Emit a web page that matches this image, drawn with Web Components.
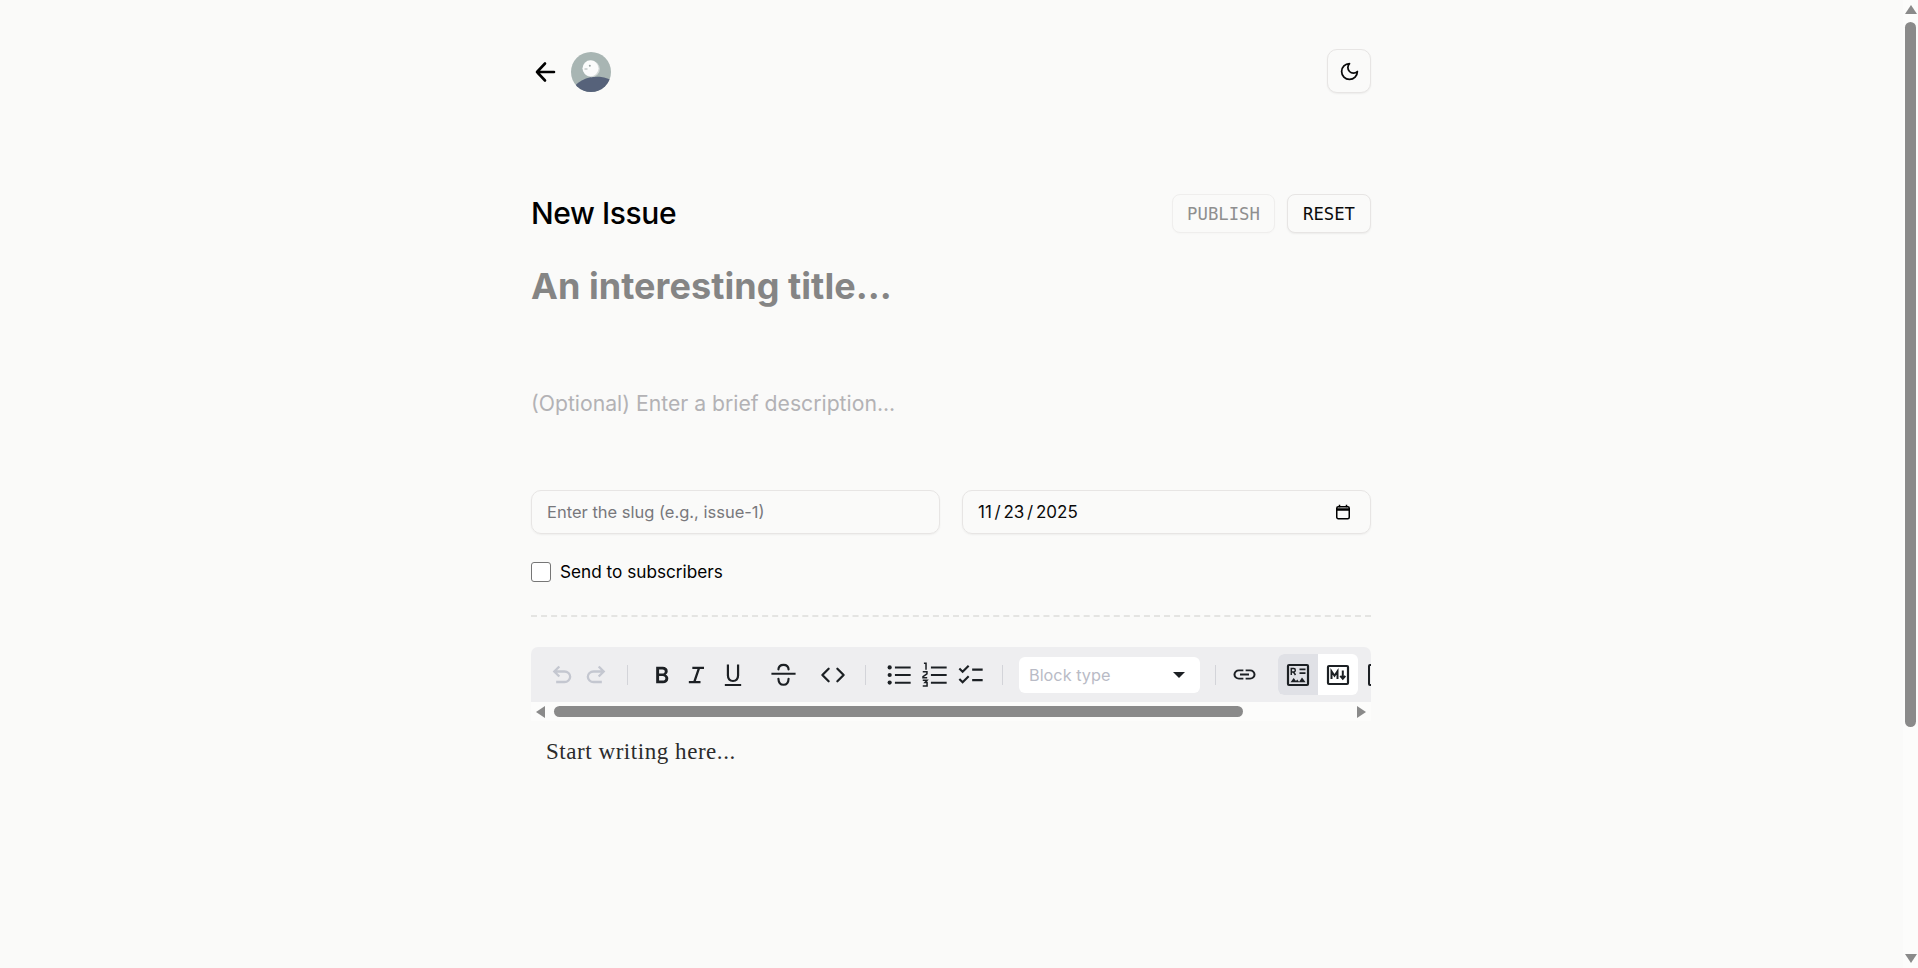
<!doctype html>
<html lang="en">
<head>
<meta charset="utf-8">
<title>New Issue</title>
<style>
  html, body { margin: 0; height: 100%; overflow: hidden; background: #fafaf9; }
  body { display: flex; font-family: Inter, "Liberation Sans", sans-serif; color: #0a0a0a; }
  issue-page { flex: 1; min-width: 0; }
</style>
</head>
<body>
<issue-page>
  <top-nav></top-nav>
  <page-heading></page-heading>
  <issue-meta></issue-meta>
  <md-editor></md-editor>
</issue-page>
<page-scrollbar></page-scrollbar>

<script>
const SERIF = '"Liberation Serif", serif';

const ICONS = {
  undo: '<path d="M7 19v-2h7.1q1.575 0 2.738-1T18 13.5q0-1.5-1.162-2.5T14.1 10H7.8l2.6 2.6L9 14 4 9l5-5 1.4 1.4L7.8 8h6.3q2.425 0 4.163 1.575T20 13.5q0 2.35-1.738 3.925T14.1 19H7z"/>',
  redo: '<path d="M17 19v-2H9.9q-1.575 0-2.738-1T6 13.5q0-1.5 1.162-2.5T9.9 10h6.3l-2.6 2.6L15 14l5-5-5-5-1.4 1.4L16.2 8H9.9q-2.425 0-4.163 1.575T4 13.5q0 2.35 1.738 3.925T9.9 19H17z"/>',
  bold: '<path fill-rule="evenodd" d="M7 19V5h5.6q1.9 0 3.1 1t1.2 2.7q0 1-.5 1.8t-1.3 1.2q1.1.4 1.7 1.3t.6 2q0 1.9-1.300 2.950T12.800 19H7zm2.500-8.200h2.900q.9 0 1.450-.5T14.400 9q0-.8-.55-1.300T12.400 7.200H9.500v3.600zm0 6h3.200q1 0 1.600-.550T14.900 14.900q0-.9-.6-1.450T12.700 12.900H9.500v3.900z"/>',
  italic: '<path d="M5 19v-1.800h3.900l3.500-10.400H8V5h10v1.800h-3.500l-3.500 10.400H15V19H5z"/>',
  underline: '<path d="M5 21.500v-1.800h14v1.800H5zm7-3.500q-2.500 0-3.900-1.500T6.700 12.400V3h1.900v9.400q0 1.800.9 2.800t2.500 1q1.600 0 2.500-1t.9-2.800V3h1.900v9.400q0 2.600-1.400 4.100T12 18z"/>',
  strike: '<path d="M2 10.500h20v1.800H2z"/><path fill="none" stroke="currentColor" stroke-width="1.800" stroke-linecap="round" d="M7.800 7.800Q8 4 12 4t4.200 3.800M7.800 15.500Q8 20.500 12 20.500t4.200-5"/>',
  code: '<path fill="none" stroke="currentColor" stroke-width="1.800" stroke-linecap="round" stroke-linejoin="round" d="M8.500 7 3.500 12l5 5M15.500 7l5 5-5 5"/>',
  bullets: '<circle cx="4" cy="5.500" r="1.800"/><circle cx="4" cy="12" r="1.800"/><circle cx="4" cy="18.500" r="1.800"/><path d="M8.500 4.700H22v1.700H8.500zM8.500 11.200H22v1.700H8.500zM8.500 17.700H22v1.700H8.500z"/>',
  numbered: '<path d="M8.500 4.700H22v1.700H8.500zM8.500 11.200H22v1.700H8.500zM8.500 17.700H22v1.700H8.500z"/><path fill="none" stroke="currentColor" stroke-width="1.300" d="M2.500 2h1.800v5.500M1.500 9.300h3.600v1.700l-3.400 2.400v1h3.600M1.500 16.500h3.700l-1.800 1.900h1.800v3H1.500"/>',
  checks: '<path fill="none" stroke="currentColor" stroke-width="1.800" d="M2 6.500l2.800 2.800L10 4M2 15.500l2.800 2.800L10 13"/><path d="M13 6.500h9v1.800h-9zM13 15.500h9v1.800h-9z"/>',
  link: '<path d="M7 16.500q-2 0-3.400-1.300T2.200 12t1.400-3.200T7 7.500h4v1.700H7q-1.300 0-2.150.8T4 12t.85 2 2.150.8h4v1.700H7zm1-3.600v-1.800h8v1.800H8zm5 3.600v-1.700h4q1.300 0 2.150-.8T20 12t-.85-2T17 9.200h-4V7.500h4q2 0 3.400 1.300T21.800 12t-1.400 3.200T17 16.500h-4z"/>',
  rich: '<rect x="2" y="2" width="20" height="20" rx="1" fill="none" stroke="currentColor" stroke-width="2.200"/><path d="M13.500 5.500h6v1.800h-6zM13.500 9.300h6v1.800h-6zM4.500 19.300l3.200-4.300 2.300 3 1.200-1.500 2.200 2.800zM12.800 19.300l3.200-4.800 3.600 4.800z"/><path fill="none" stroke="currentColor" stroke-width="1.500" d="M5.300 12V5.600h2.400q1.600 0 1.600 1.700T7.700 9H5.300M7.500 9l2 3"/>',
  markdown: '<rect x="2" y="3" width="20" height="18" rx="1" fill="none" stroke="currentColor" stroke-width="2.200"/><path fill="none" stroke="currentColor" stroke-width="2" d="M5.500 16V8.300l3 4.400 3-4.400V16M16.800 7.500V15M14.300 12.800l2.500 3 2.500-3"/>'
};

function icon(name, size) {
  return `<svg viewBox="0 0 24 24" width="${size}" height="${size}" fill="currentColor" aria-hidden="true">${ICONS[name]}</svg>`;
}

class IssuePage extends HTMLElement {
  constructor() {
    super();
    this.attachShadow({ mode: 'open' });
    this.shadowRoot.innerHTML = `
      <style>
        :host { display: block; padding-right: 1px; }
        .wrap {
          width: 840px;
          margin: 0 auto;
          padding-top: 49px;
          display: flex;
          flex-direction: column;
        }
      </style>
      <div class="wrap"><slot></slot></div>
    `;
  }
}

class TopNav extends HTMLElement {
  constructor() {
    super();
    this.attachShadow({ mode: 'open' });
    this.shadowRoot.innerHTML = `
      <style>
        :host { display: flex; align-items: center; justify-content: space-between; height: 44px; }
        .left { display: flex; align-items: center; gap: 14px; padding-top: 1px; }
        svg { display: block; }
        .back { color: #000; }
        button {
          width: 44px; height: 44px; padding: 0; box-sizing: border-box;
          display: flex; align-items: center; justify-content: center;
          background: #fafaf9; color: #0a0a0a;
          border: 1px solid #e7e5e4; border-radius: 10px;
          box-shadow: 0 1px 2px rgba(0,0,0,.06);
        }
      </style>
      <div class="left">
        <svg class="back" width="26" height="24" viewBox="0 0 26 24" fill="none" stroke="currentColor" stroke-width="2.600" stroke-linecap="round" stroke-linejoin="round">
          <path d="M6 12h17M14 3.500 6 12l8 8.500"/>
        </svg>
        <svg width="40" height="40" viewBox="0 0 40 40">
          <defs><clipPath id="c"><circle cx="20" cy="20" r="20"/></clipPath></defs>
          <g clip-path="url(#c)">
            <rect width="40" height="40" fill="#a8b5b3"/>
            <ellipse cx="23" cy="42" rx="24" ry="17" fill="#56627a" transform="rotate(-12 23 42)"/>
            <circle cx="20.500" cy="17" r="8.300" fill="#d4d9d8"/>
            <circle cx="19.500" cy="16.300" r="8" fill="#fbfbfb"/>
            <circle cx="18.800" cy="13.700" r="1" fill="#9aa3a3"/>
            <path d="M13.500 17h3" stroke="#a9b0b0" stroke-width="1"/>
          </g>
        </svg>
      </div>
      <button aria-label="Toggle theme">
        <svg width="21" height="21" viewBox="0 0 24 24" fill="none" stroke="currentColor" stroke-width="2" stroke-linecap="round" stroke-linejoin="round">
          <path d="M12 3a6 6 0 0 0 9 9 9 9 0 1 1-9-9Z"/>
        </svg>
      </button>
    `;
  }
}

class PageHeading extends HTMLElement {
  constructor() {
    super();
    this.attachShadow({ mode: 'open' });
    this.shadowRoot.innerHTML = `
      <style>
        :host { display: block; margin-top: 101px; }
        .row { display: flex; align-items: center; justify-content: space-between; height: 39px; }
        h1 { margin: 0; font: 500 30px/39px Inter, "Liberation Sans", sans-serif; letter-spacing: -.4px; color: #000; }
        .actions { display: flex; gap: 12px; }
        button {
          height: 39px; box-sizing: border-box; padding: 2px 0 0;
          font: 400 17.300px/1 "DejaVu Sans Mono", "Liberation Mono", monospace;
          background: #fafaf9; color: #0a0a0a;
          border: 1px solid #e7e5e4; border-radius: 8px;
          box-shadow: 0 1px 2px rgba(0,0,0,.06);
        }
        .pub { width: 103px; }
        .res { width: 84px; }
        button[disabled] { color: #8f8f8f; border-color: #efeeed; box-shadow: 0 1px 2px rgba(0,0,0,.02); }
        .title {
          margin-top: 29px; font: 700 36px/48px Inter, "Liberation Sans", sans-serif;
          letter-spacing: .05px; color: #858585; height: 72px;
        }
        .desc { margin-top: 55px; font: 400 21.200px/28px Inter, "Liberation Sans", sans-serif; color: #b3b2b5; height: 101px; }
      </style>
      <div class="row">
        <h1>New Issue</h1>
        <div class="actions">
          <button class="pub" disabled>PUBLISH</button>
          <button class="res">RESET</button>
        </div>
      </div>
      <div class="title">An interesting title...</div>
      <div class="desc">(Optional) Enter a brief description...</div>
    `;
  }
}

class IssueMeta extends HTMLElement {
  constructor() {
    super();
    this.attachShadow({ mode: 'open' });
    this.shadowRoot.innerHTML = `
      <style>
        :host { display: block; }
        .fields { display: grid; grid-template-columns: 1fr 1fr; gap: 22px; }
        .field {
          height: 44px; box-sizing: border-box; padding: 0 19px 0 15px;
          display: flex; align-items: center; justify-content: space-between;
          border: 1px solid #e7e5e4; border-radius: 10px;
          box-shadow: 0 1px 2px rgba(0,0,0,.05);
          font-size: 16.500px;
        }
        .hint { color: #78787c; }
        .date { color: #0a0a0a; font-size: 17px; }
        .date b { font-weight: 400; margin: 0 2.750px; }
        .check { display: flex; align-items: center; gap: 9px; margin-top: 28px; font-size: 17.200px; color: #000; line-height: 20px; }
        .box { width: 20px; height: 20px; box-sizing: border-box; background: #fff; border: 1.500px solid #767676; border-radius: 3px; }
        hr { margin: 33px 0 0; border: 0; border-top: 2px dashed #e4e4e2; }
        svg { display: block; }
      </style>
      <div class="fields">
        <div class="field"><span class="hint">Enter the slug (e.g., issue-1)</span></div>
        <div class="field">
          <span class="date">11<b>/</b>23<b>/</b>2025</span>
          <svg width="16" height="16" viewBox="0 0 16 16" fill="none" stroke="#000" stroke-width="1.500">
            <rect x="1.750" y="2.750" width="12.500" height="12" rx="1.500"/>
            <path d="M1 5.500h14" stroke-width="2.500"/><path d="M4.500 .8v2.500M11.500 .8v2.500"/>
          </svg>
        </div>
      </div>
      <label class="check"><span class="box"></span>Send to subscribers</label>
      <hr>
    `;
  }
}

class ToolBtn extends HTMLElement {
  constructor() {
    super();
    const name = this.getAttribute('icon');
    const w = this.getAttribute('w') || '30';
    this.attachShadow({ mode: 'open' });
    this.shadowRoot.innerHTML = `
      <style>
        :host { display: flex; align-items: center; justify-content: center; width: ${w}px; height: 30px; flex: none; color: #1c2024; }
        :host([off]) { color: #c4c7d0; }
        svg { display: block; flex: none; }
      </style>
      ${icon(name, this.getAttribute('size') || 28)}
    `;
  }
}

class MdEditor extends HTMLElement {
  constructor() {
    super();
    this.attachShadow({ mode: 'open' });
    this.shadowRoot.innerHTML = `
      <style>
        :host { display: block; margin-top: 30px; }
        .toolbar {
          height: 55px; box-sizing: border-box; padding: 0 0 0 13px;
          display: flex; align-items: center; overflow: hidden;
          background: #eeeef0; border-radius: 7px 7px 0 0;
        }
        .sep { width: 1px; height: 20px; background: #d3d4d9; flex: none; }
        .select {
          width: 181px; height: 36px; flex: none; box-sizing: border-box; padding: 0 15px 0 10px;
          display: flex; align-items: center; justify-content: space-between;
          background: #fff; border-radius: 6px; color: #b9bbc6; font-size: 16.300px;
          font-family: Inter, "Liberation Sans", sans-serif; font-weight: 400;
        }
        .caret { width: 0; height: 0; border: 6px solid transparent; border-top: 6px solid #1c2024; border-bottom: 0; }
        .toggle { display: flex; height: 41px; flex: none; border-radius: 6px; overflow: hidden; background: #fff; margin-left: 19px; }
        .toggle span { display: flex; align-items: center; justify-content: center; width: 40px; color: #1c2024; }
        .toggle .on { background: #e0e1e6; }
        .last { width: 24px; height: 22px; box-sizing: border-box; flex: none; margin-left: 10px; border: 2.200px solid #1c2024; border-radius: 2px; }
        svg { display: block; }
        .hbar { height: 19px; display: flex; align-items: center; background: #fcfcfb; }
        .hbar i { display: block; width: 0; height: 0; border: 6px solid transparent; flex: none; }
        .hbar .l { border-right: 9px solid #8a8a8a; border-left: 0; margin-left: 5px; }
        .hbar .r { border-left: 9px solid #8a8a8a; border-right: 0; margin-left: auto; margin-right: 5px; }
        .thumb { width: 689px; height: 11px; background: #8a8a8a; border-radius: 6px; margin-left: 9px; }
        .body { padding: 15px; font: 400 23px/32px ${SERIF}; letter-spacing: .55px; color: #2b2b2b; }
      </style>
      <div class="toolbar">
        <tool-btn icon="undo" off w="35"></tool-btn>
        <tool-btn icon="redo" off w="34"></tool-btn>
        <span class="sep" style="margin:0 16px 0 14px"></span>
        <tool-btn icon="bold" w="35"></tool-btn>
        <tool-btn icon="italic" w="36"></tool-btn>
        <tool-btn icon="underline" w="36"></tool-btn>
        <tool-btn icon="strike" w="64" size="29"></tool-btn>
        <tool-btn icon="code" w="36" size="30"></tool-btn>
        <span class="sep" style="margin:0 15px 0 14px"></span>
        <tool-btn icon="bullets" w="36"></tool-btn>
        <tool-btn icon="numbered" w="36"></tool-btn>
        <tool-btn icon="checks" w="36"></tool-btn>
        <span class="sep" style="margin:0 16px 0 13px"></span>
        <div class="select">Block type<span class="caret"></span></div>
        <span class="sep" style="margin:0 13px 0 15px"></span>
        <tool-btn icon="link" w="30" size="27"></tool-btn>
        <div class="toggle">
          <span class="on">${icon('rich', 24)}</span>
          <span>${icon('markdown', 24)}</span>
        </div>
        <span class="last"></span>
      </div>
      <div class="hbar"><i class="l"></i><div class="thumb"></div><i class="r"></i></div>
      <div class="body">Start writing here...</div>
    `;
  }
}

class PageScrollbar extends HTMLElement {
  constructor() {
    super();
    this.attachShadow({ mode: 'open' });
    this.shadowRoot.innerHTML = `
      <style>
        :host { display: flex; flex-direction: column; align-items: center; width: 15px; height: 968px; flex: none; background: #fcfcfb; padding-top: 5px; box-sizing: border-box; }
        i { display: block; width: 0; height: 0; border: 6.500px solid transparent; flex: none; }
        .up { border-bottom: 9px solid #8a8a8a; border-top: 0; }
        .thumb { width: 11px; height: 705px; margin-top: 8px; background: #8a8a8a; border-radius: 6px; flex: none; }
        .down { border-top: 9px solid #8a8a8a; border-bottom: 0; margin-top: auto; margin-bottom: 5px; }
      </style>
      <i class="up"></i><div class="thumb"></div><i class="down"></i>
    `;
  }
}

customElements.define('issue-page', IssuePage);
customElements.define('top-nav', TopNav);
customElements.define('page-heading', PageHeading);
customElements.define('issue-meta', IssueMeta);
customElements.define('tool-btn', ToolBtn);
customElements.define('md-editor', MdEditor);
customElements.define('page-scrollbar', PageScrollbar);
</script>
</body>
</html>
